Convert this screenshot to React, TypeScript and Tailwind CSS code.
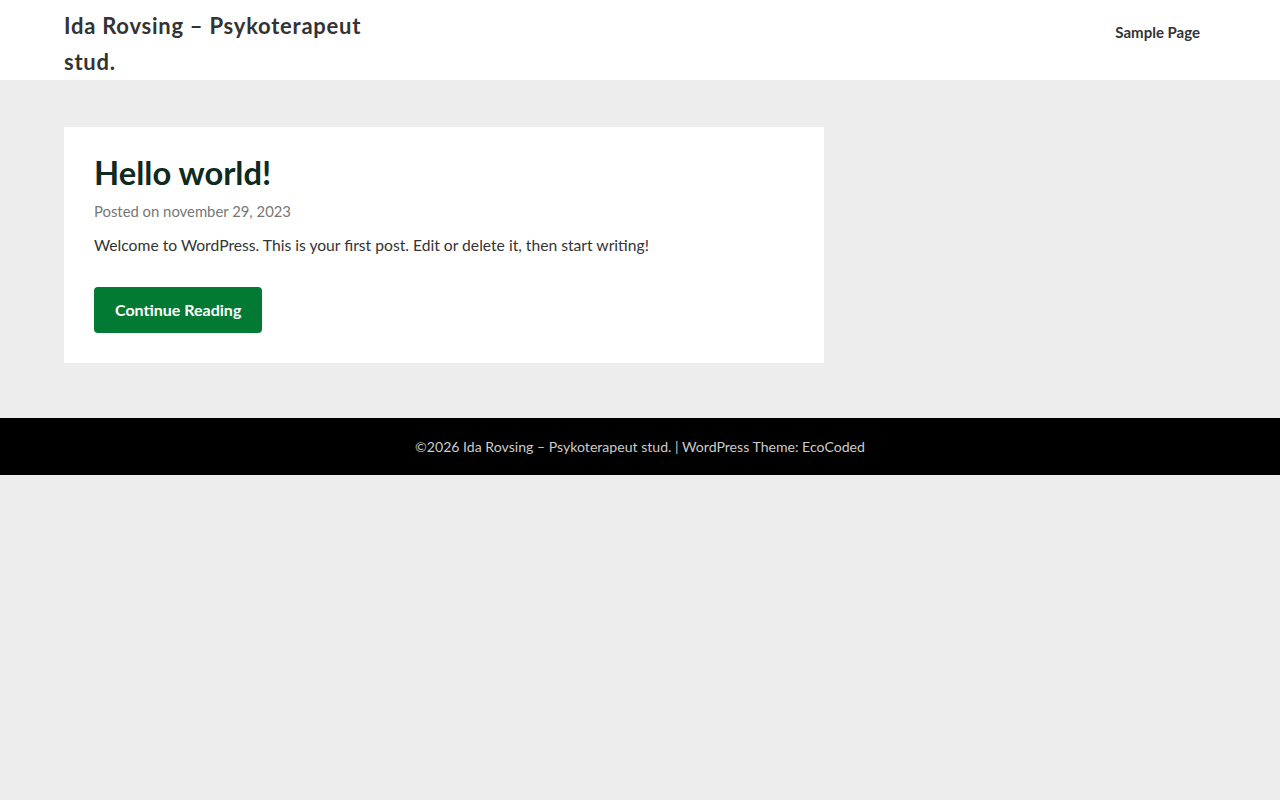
import React from 'react';

export default function App() {
    return (
        <div className="min-h-[800px] bg-[#ededed] text-[#333]" style={{ fontFamily: 'Lato, "Noto Sans", sans-serif' }}>
            {/* Header */}
            <header className="bg-white h-[80px]">
                <div className="mx-[64px] flex items-start justify-between">
                    <div className="w-[330px] pt-[8px]">
                        <a className="text-[22px] font-bold leading-[36px] tracking-[0.75px] text-[#333]">
                            Ida Rovsing – Psykoterapeut stud.
                        </a>
                    </div>
                    <nav className="pt-[20px] pr-[16px]">
                        <a className="text-[15px] font-bold text-[#333]">Sample Page</a>
                    </nav>
                </div>
            </header>

            {/* Content */}
            <main className="px-[64px] pt-[47px] pb-[55px]">
                <article className="w-[760px] bg-white p-[30px]">
                    <h2 className="text-[32.7px] font-bold leading-[1.1] text-[#0f2a1f] mt-[-2px]">Hello world!</h2>
                    <div className="mt-[9px] text-[14.85px] text-[#777]">
                        Posted on <span>november 29, 2023</span>
                    </div>
                    <p className="mt-[12px] text-[15.66px] text-[#333]">
                        Welcome to WordPress. This is your first post. Edit or delete it, then start writing!
                    </p>
                    <button className="mt-[29px] h-[46px] px-[21px] rounded-[4px] bg-[#037a33] text-white text-[16px] font-bold">
                        Continue Reading
                    </button>
                </article>
            </main>

            {/* Footer */}
            <footer className="bg-black h-[57px] flex items-center justify-center">
                <p className="text-[14.1px] text-[#ccc]">
                    ©2026 Ida Rovsing – Psykoterapeut stud. | WordPress Theme: EcoCoded
                </p>
            </footer>
        </div>
    );
}
